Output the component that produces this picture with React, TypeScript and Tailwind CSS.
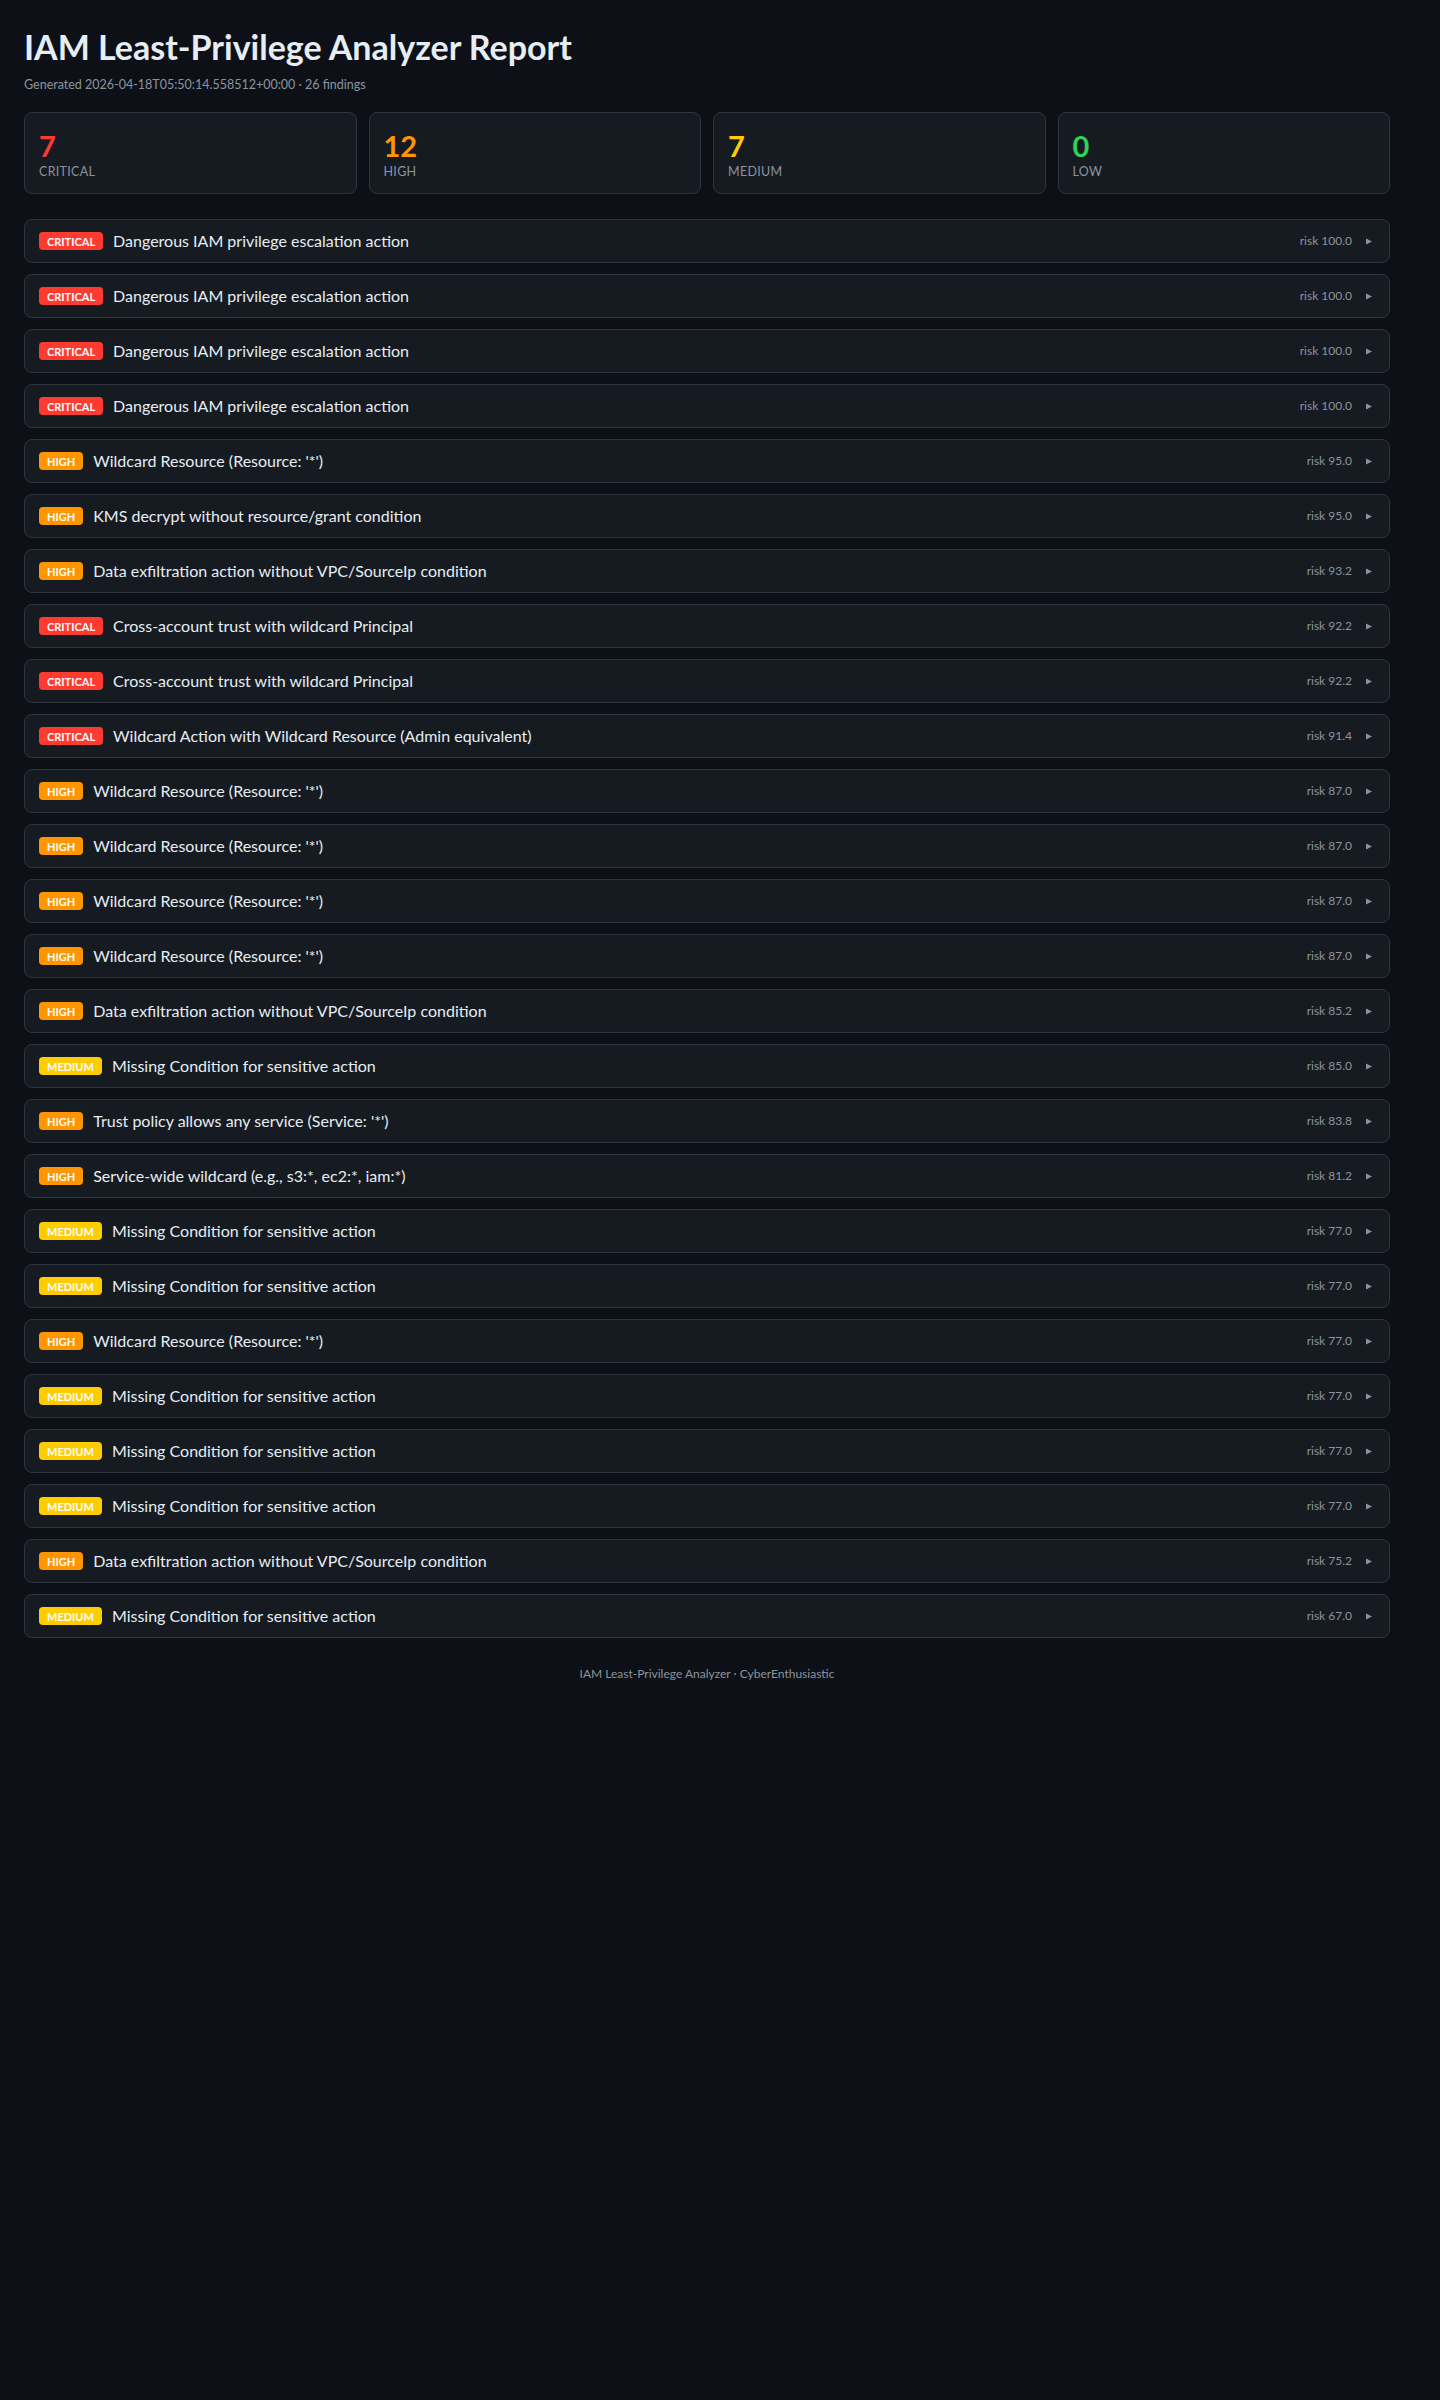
import React from "react";

type Sev = "CRITICAL" | "HIGH" | "MEDIUM";

const findings: [Sev, string, string][] = [
  ["CRITICAL", "Dangerous IAM privilege escalation action", "100.0"],
  ["CRITICAL", "Dangerous IAM privilege escalation action", "100.0"],
  ["CRITICAL", "Dangerous IAM privilege escalation action", "100.0"],
  ["CRITICAL", "Dangerous IAM privilege escalation action", "100.0"],
  ["HIGH", "Wildcard Resource (Resource: '*')", "95.0"],
  ["HIGH", "KMS decrypt without resource/grant condition", "95.0"],
  ["HIGH", "Data exfiltration action without VPC/SourceIp condition", "93.2"],
  ["CRITICAL", "Cross-account trust with wildcard Principal", "92.2"],
  ["CRITICAL", "Cross-account trust with wildcard Principal", "92.2"],
  ["CRITICAL", "Wildcard Action with Wildcard Resource (Admin equivalent)", "91.4"],
  ["HIGH", "Wildcard Resource (Resource: '*')", "87.0"],
  ["HIGH", "Wildcard Resource (Resource: '*')", "87.0"],
  ["HIGH", "Wildcard Resource (Resource: '*')", "87.0"],
  ["HIGH", "Wildcard Resource (Resource: '*')", "87.0"],
  ["HIGH", "Data exfiltration action without VPC/SourceIp condition", "85.2"],
  ["MEDIUM", "Missing Condition for sensitive action", "85.0"],
  ["HIGH", "Trust policy allows any service (Service: '*')", "83.8"],
  ["HIGH", "Service-wide wildcard (e.g., s3:*, ec2:*, iam:*)", "81.2"],
  ["MEDIUM", "Missing Condition for sensitive action", "77.0"],
  ["MEDIUM", "Missing Condition for sensitive action", "77.0"],
  ["HIGH", "Wildcard Resource (Resource: '*')", "77.0"],
  ["MEDIUM", "Missing Condition for sensitive action", "77.0"],
  ["MEDIUM", "Missing Condition for sensitive action", "77.0"],
  ["MEDIUM", "Missing Condition for sensitive action", "77.0"],
  ["HIGH", "Data exfiltration action without VPC/SourceIp condition", "75.2"],
  ["MEDIUM", "Missing Condition for sensitive action", "67.0"],
];

const badgeBg: Record<Sev, string> = {
  CRITICAL: "bg-[#ff3b30]",
  HIGH: "bg-[#ff9500]",
  MEDIUM: "bg-[#ffcc00]",
};

const stats = [
  { n: "7", label: "CRITICAL", color: "text-[#ff3b30]" },
  { n: "12", label: "HIGH", color: "text-[#ff9500]" },
  { n: "7", label: "MEDIUM", color: "text-[#ffcc00]" },
  { n: "0", label: "LOW", color: "text-[#30d158]" },
];

export default function App() {
  return (
    <div
      className="min-h-screen bg-[#0d1117] text-[#e6edf3]"
      style={{ fontFamily: '"Segoe UI", Lato, "Noto Sans", sans-serif' }}
    >
      <div className="w-[1414px] px-6 pt-[27px]">
        <h1 className="text-[34px] leading-[40px] font-bold text-[#e6edf3]">
          IAM Least-Privilege Analyzer Report
        </h1>
        <div className="mt-[9px] text-[12.5px] leading-[18px] text-[#8b949e]">
          Generated 2026-04-18T05:50:14.558512+00:00 · 26 findings
        </div>

        <div className="mt-[18px] grid grid-cols-4 gap-3">
          {stats.map((s) => (
            <div
              key={s.label}
              className="h-[82px] rounded-lg border border-[#30363d] bg-[#161b22] px-[14px] pt-[17px]"
            >
              <div className={`text-[29px] leading-[32px] font-bold ${s.color}`}>{s.n}</div>
              <div className="mt-[2px] text-[12.5px] leading-[16px] tracking-[0.3px] text-[#8b949e]">
                {s.label}
              </div>
            </div>
          ))}
        </div>

        <div className="mt-[25px] flex flex-col gap-[11px]">
          {findings.map(([sev, title, risk], i) => (
            <div
              key={i}
              className="flex h-[44px] items-center rounded-lg border border-[#30363d] bg-[#161b22] pl-[14px] pr-[17px]"
            >
              <span
                className={`inline-flex h-[18px] items-center rounded-[4px] px-2 text-[11px] font-bold leading-none text-white ${badgeBg[sev]}`}
              >
                {sev}
              </span>
              <span className="ml-[10px] text-[16px] leading-[20px] text-[#e6edf3]">{title}</span>
              <span className="ml-auto text-[12px] leading-[16px] text-[#8b949e]">risk {risk}</span>
              <svg className="ml-[14px]" width="6" height="7" viewBox="0 0 6 7">
                <polygon points="0,0.5 6,3.5 0,6.5" fill="#8b949e" />
              </svg>
            </div>
          ))}
        </div>

        <div className="mt-[28px] pb-8 text-center text-[12px] leading-[16px] text-[#8b949e]">
          IAM Least-Privilege Analyzer · CyberEnthusiastic
        </div>
      </div>
    </div>
  );
}
